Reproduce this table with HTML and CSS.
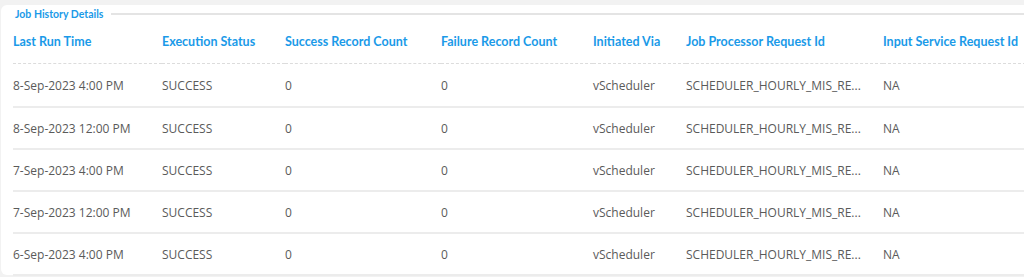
FILE: index.html
```html
<!DOCTYPE html>
<html>
<head>
<meta charset="utf-8">
<link rel="stylesheet" href="styles.css">
</head>
<body>
<div class="card">
  <div class="legend">
    <span class="legend-title">Job History Details</span>
    <span class="legend-line"></span>
  </div>
  <table class="grid">
    <colgroup>
      <col class="c1"><col class="c2"><col class="c3"><col class="c4"><col class="c5"><col class="c6"><col class="c7">
    </colgroup>
    <thead>
      <tr>
        <th>Last Run Time</th><th>Execution Status</th><th>Success Record Count</th><th>Failure Record Count</th><th>Initiated Via</th><th>Job Processor Request Id</th><th>Input Service Request Id</th>
      </tr>
    </thead>
    <tbody>
      <tr><td>8-Sep-2023 4:00 PM</td><td>SUCCESS</td><td>0</td><td>0</td><td>vScheduler</td><td>SCHEDULER_HOURLY_MIS_RE...</td><td>NA</td></tr>
      <tr><td>8-Sep-2023 12:00 PM</td><td>SUCCESS</td><td>0</td><td>0</td><td>vScheduler</td><td>SCHEDULER_HOURLY_MIS_RE...</td><td>NA</td></tr>
      <tr><td>7-Sep-2023 4:00 PM</td><td>SUCCESS</td><td>0</td><td>0</td><td>vScheduler</td><td>SCHEDULER_HOURLY_MIS_RE...</td><td>NA</td></tr>
      <tr><td>7-Sep-2023 12:00 PM</td><td>SUCCESS</td><td>0</td><td>0</td><td>vScheduler</td><td>SCHEDULER_HOURLY_MIS_RE...</td><td>NA</td></tr>
      <tr><td>6-Sep-2023 4:00 PM</td><td>SUCCESS</td><td>0</td><td>0</td><td>vScheduler</td><td>SCHEDULER_HOURLY_MIS_RE...</td><td>NA</td></tr>
    </tbody>
  </table>
</div>
</body>
</html>
```
FILE: styles.css
```css
html, body {
  margin: 0;
  padding: 0;
  background: #f2f2f2;
  overflow: hidden;
  width: 1024px;
  height: 277px;
}
body {
  padding-top: 5px;
  padding-left: 1px;
  font-family: "Open Sans", "Liberation Sans", sans-serif;
}
.card {
  width: 1100px;
  height: 270px;
  background: #fff;
  border-radius: 6px;
  box-sizing: border-box;
  padding-left: 12px;
}
.legend {
  display: flex;
  align-items: center;
  height: 16px;
  padding-top: 1px;
  padding-left: 2px;
}
.legend-title {
  font-family: Lato, "Open Sans", sans-serif;
  font-weight: 700;
  font-size: 10.5px;
  color: #1a9ae8;
  white-space: nowrap;
}
.legend-line {
  flex: 1;
  height: 2px;
  background: #e4e4e4;
  margin-left: 8px;
}
.grid {
  border-collapse: collapse;
  table-layout: fixed;
  width: 1088px;
}
.c1 { width: 149px; }
.c2 { width: 123px; }
.c3 { width: 156px; }
.c4 { width: 152px; }
.c5 { width: 93px; }
.c6 { width: 197px; }
.grid th {
  font-family: Lato, "Open Sans", sans-serif;
  font-weight: 700;
  font-size: 12.5px;
  color: #1a9ae8;
  text-align: left;
  height: 39px;
  padding: 0 0 2px 0;
  border-bottom: 1px dashed #dcdcdc;
  white-space: nowrap;
}
.grid td {
  font-size: 12px;
  color: #5a5a5a;
  height: 40px;
  padding: 0;
  border-bottom: 2px solid #ececec;
  white-space: nowrap;
}
.grid tbody tr:first-child td {
  height: 42px;
}
```
